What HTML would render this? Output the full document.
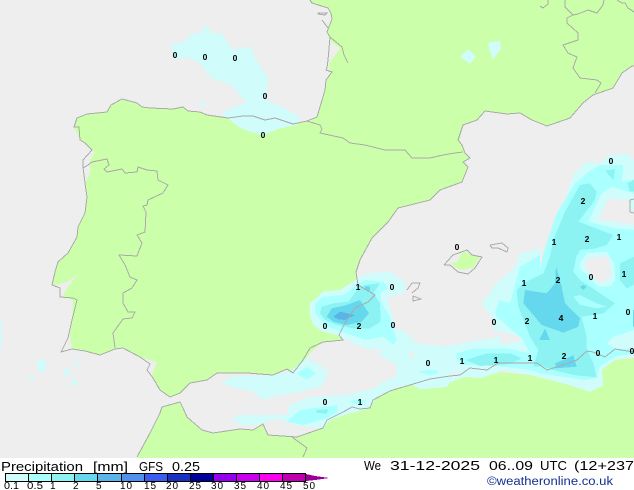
<!DOCTYPE html>
<html><head><meta charset="utf-8"><style>
html,body{margin:0;padding:0;background:#fff;width:634px;height:490px;overflow:hidden}
svg{display:block}
polygon{shape-rendering:crispEdges}
polyline{fill:none;stroke:#aaa;stroke-width:1;vector-effect:non-scaling-stroke;shape-rendering:crispEdges}
.a{fill:#d0fcfc}.b{fill:#aaffff}.c{fill:#8cf2f2}.d{fill:#66d8ee}.e{fill:#5ab4e8}.g{fill:#eeeeee}
.l text{font:bold 8.5px "Liberation Sans",sans-serif;fill:#000;text-anchor:middle}
.t{font-family:"Liberation Sans",sans-serif;fill:#000}
</style></head><body>
<svg width="634" height="490" viewBox="0 0 634 490" xmlns="http://www.w3.org/2000/svg">
<rect width="634" height="458" fill="#eeeeee"/>
<g fill="#ccffaa">
<polygon points="310,0 315,5 330,9 330,15 332,19 329,27 327,32 329,38 331,42 340,48 329,63 329,70 331,72 327,80 325,90 320,107 317,117 310,121 293,124 275,118 265,120 253,116 243,116 228,118 207,115 200,112 188,111 183,107 173,109 150,108 142,107 137,103 122,99 111,105 107,112 87,114 77,118 74,127 80,140 85,143 95,152 90,160 90,173 85,183 87,197 85,213 78,227 77,237 68,253 58,262 55,272 53,286 67,282 77,275 68,287 62,297 73,300 72,320 70,335 72,349 85,351 100,355 115,349 123,348 140,357 157,362 152,375 160,390 170,397 182,393 190,383 207,380 217,373 247,373 273,375 287,369 293,373 313,350 323,342 343,340 339,335 345,323 355,308 368,302 375,295 358,285 356,272 360,260 372,238 388,222 398,208 418,203 430,200 440,190 462,182 468,167 463,162 470,158 465,153 462,145 460,140 463,125 477,120 485,111 507,114 520,113 532,120 547,126 570,118 583,103 593,95 613,88 622,73 632,66 634,66 634,0"/>
<polygon points="137,458 150,433 160,413 162,407 180,402 183,408 187,417 202,430 213,433 240,429 253,430 263,424 268,435 297,437 323,428 327,420 343,412 352,407 360,409 370,408 373,400 380,395 400,387 413,385 420,389 447,387 453,378 467,377 480,378 500,372 530,375 563,383 590,392 602,370 613,360 634,358 634,458"/>
<polygon points="450,263 457,262 463,251 472,255 480,257 473,268 460,270"/>
</g>
<!-- Biscay, France, Atlantic -->
<g class="a">
<g transform="translate(150 0) scale(.33333)"><polygon class="a" points="65,130 105,125 125,100 150,100 170,75 190,100 215,100 250,150 305,140 315,175 355,235 345,300 395,320 450,350 440,375 390,385 340,405 300,395 265,380 240,360 215,340 250,322 290,310 245,255 185,235 150,190 110,172 70,180"/><polygon class="a" points="150,310 157,300 168,312 157,322"/></g>
<g transform="translate(440 0) scale(.33333)"><polygon class="a" points="60,170 85,148 108,170 90,192"/><polygon class="a" points="145,128 180,123 183,145 160,178 148,150"/></g>
<g transform="translate(0 90) scale(.33333)"><polygon class="a" points="113,810 135,805 138,840 120,850 112,830"/><polygon class="a" points="85,865 95,857 105,865 95,872"/><polygon class="a" points="190,845 202,835 213,845 200,860"/><polygon class="a" points="222,820 230,812 240,822 230,832"/><polygon class="a" points="213,875 223,862 233,878 223,890"/><polygon class="a" points="0,695 4,695 4,775 0,775"/></g>
</g>
<!-- Alboran -->
<g transform="translate(130 350) scale(.33333)">
<polygon class="a" points="280,100 300,80 420,75 480,65 510,40 530,25 570,45 595,70 575,110 490,130 450,135 400,150 370,125 300,110"/>
<polygon class="b" points="500,70 530,50 560,70 530,90"/>
<polygon class="a" points="305,210 320,195 470,195 480,165 540,140 650,135 730,115 780,90 780,125 740,140 720,175 660,190 600,210 580,235 510,228 480,220 440,205 380,225 340,225"/>
<polygon class="b" points="470,215 510,180 620,165 625,185 590,205 520,225"/>
<polygon class="c" points="558,180 595,178 590,192 560,188"/>
<polygon class="b" points="655,155 680,148 710,152 690,165"/>
</g>
<!-- middle band -->
<g transform="translate(380 330) scale(.33333)">
<polygon class="a" points="0,0 70,0 110,40 200,50 300,30 360,20 360,125 300,145 260,140 220,145 200,170 120,178 100,165 60,170 0,190 0,160 50,140 50,105 35,95 0,78"/>
<polygon class="g" points="88,65 100,65 102,80 95,88 88,80"/>
<polygon class="b" points="115,125 150,118 178,125 145,135"/>
<polygon class="b" points="0,0 40,0 55,30 40,55 15,30 0,20"/>
</g>
<!-- Valencia blob -->
<g transform="translate(290 260) scale(.33333)">
<polygon class="a" points="58,160 60,130 100,95 150,90 195,60 210,50 240,40 300,35 350,70 340,100 290,110 300,140 320,210 325,265 290,260 240,270 190,250 140,225 100,215 70,195"/>
<polygon class="b" points="75,160 75,130 100,110 160,105 200,75 225,60 280,65 295,85 270,100 275,130 300,170 320,240 310,255 280,230 225,240 170,220 110,200"/>
<polygon class="c" points="90,160 95,140 130,130 175,125 205,85 225,75 270,70 250,100 270,130 272,185 240,205 190,205 140,195 105,180"/>
<polygon class="d" points="110,170 125,145 170,135 210,120 237,160 215,185 170,195 130,185"/>
<polygon class="e" points="130,170 150,155 195,165 165,180 145,178"/>
<polygon class="d" points="225,80 240,80 240,92 225,90"/>
</g>
<!-- Big east blob -->
<g transform="translate(430 140) scale(.33333)">
<polygon class="a" points="470,65 510,70 540,45 590,40 612,60 612,650 555,660 515,690 520,735 480,755 400,730 300,705 200,688 100,712 30,738 0,745 0,635 70,625 170,615 270,605 270,590 190,570 190,540 155,490 200,430 255,380 270,340 330,325 330,380 360,300 400,195 430,105"/>
<polygon class="b" points="435,130 480,92 510,75 580,75 575,125 612,118 612,570 550,590 530,612 560,628 612,625 612,640 555,650 510,680 500,715 460,720 330,700 300,690 200,678 100,675 80,660 80,640 130,625 230,625 300,640 280,600 200,530 195,515 210,480 240,490 270,380 330,345 330,395 340,340 380,220"/>
<polygon class="a" points="475,245 515,160 545,140 612,160 612,270 555,265"/>
<polygon class="g" points="505,240 535,175 595,180 612,220 612,255 560,245"/>
<polygon class="c" points="360,350 370,300 405,215 450,135 480,130 500,155 495,180 445,245 550,285 530,315 480,330 440,345 430,395 450,420 555,490 520,520 455,530 470,590 470,625 490,670 500,712 430,705 370,690 340,680 310,680 325,630 300,590 265,500 260,450 280,430 340,400"/>
<polygon class="c" points="108,660 170,640 240,640 275,655 240,672 150,678"/>
<polygon class="c" points="525,92 555,88 550,120"/>
<polygon class="c" points="592,130 612,120 612,155 600,155"/>
<polygon class="b" points="435,370 450,330 560,320 570,370 570,445 555,490 450,420 430,395"/>
<polygon class="c" points="570,370 612,350 612,435 590,445 570,420"/>
<polygon class="a" points="450,370 470,340 530,335 552,370 555,420 540,440 505,440 450,385"/>
<polygon class="g" points="470,355 535,350 545,410 510,430 470,390"/>
<polygon class="b" points="430,470 450,465 500,490 530,500 500,505 450,495"/>
<polygon class="d" points="378,378 395,440 405,490 450,535 445,560 400,578 335,555 280,490 285,450 350,460 375,430"/>
<polygon class="d" points="345,565 360,600 328,600"/>
<polygon class="d" points="450,440 460,435 470,440 460,450"/>
<polygon class="d" points="375,670 400,660 430,645 440,680 380,685"/>
<polygon class="d" points="609,510 612,510 612,560 609,560"/>
<polygon class="b" points="0,690 25,692 20,702 0,703"/>
<polygon class="g" points="60,700 85,695 95,705 60,708"/>
</g>
<!-- Lines -->
<polyline points="310,0 312,3 328,8 331,13 332,19 329,27 327,32 330,37 328,60 327,68 326,70 332,72 326,80 325,90 320,107 317,117 307,121 293,124 275,118 265,120 253,116 243,116 228,118 207,115 200,112 188,111 183,107 173,109 150,108 142,107 137,103 122,99 111,105 107,112 87,114 77,118 74,127 79,127 80,140 85,143 92,150 83,160 83,167 85,183 87,197 85,213 78,227 77,237 68,253 58,262 55,272 52,285 60,288 60,297 73,298 77,300 72,320 68,338 61,352 72,349 85,351 100,355 115,349 123,348 140,357 150,364 147,370 153,378 160,390 170,397 180,393 190,383 207,380 217,373 247,373 273,375 287,369 293,373 303,360 310,348 323,342 343,340 339,335 345,323 355,308 368,302 375,295 358,285 356,272 360,260 372,238 388,222 398,208 418,203 430,200 440,190 462,182 468,167 463,162 470,158 465,153 462,145 458,140 463,125 477,120 485,111 507,114 520,113 532,120 547,126 570,118 583,103 593,95 613,88 622,73 632,66 634,66"/>
<polyline points="330,37 342,47 344,55 348,63"/>
<polyline points="318,13 327,13 325,15 318,14 318,13"/>
<polyline points="322,20 328,28"/>
<polyline points="307,121 320,125 322,129 320,133 343,138 350,143 365,145 385,150 405,150 412,158 430,158 443,155 455,153 463,152"/>
<polyline points="83,168 88,165 92,162 107,159 109,165 104,169 107,172 122,169 125,173 137,172 138,167 147,170 157,171 158,180 168,185 163,193 148,200 147,205 143,206 146,212 145,232 137,235 142,243 137,256 119,255 125,265 130,277 137,280 132,288 123,293 123,303 128,312 135,312 132,318 123,319 113,333 115,348"/>
<polyline points="565,0 565,7 573,15 567,18 567,23 578,33 578,40 563,45 568,53 577,57 573,68 580,78 597,80 601,83 595,93"/>
<polyline points="573,15 578,14 588,10 597,13 603,5 604,0"/>
<polyline points="617,0 622,3 625,3 628,8 634,12"/>
<polyline points="540,6 543,8 548,4 548,0"/>
<polyline points="137,457 150,433 160,413 162,407 180,402 183,408 187,417 202,430 213,433 240,429 253,430 263,424 268,435 297,437 323,428 327,420 343,412 352,407 360,409 370,408 373,400 390,391 430,379 450,376 460,375 470,368 487,370 498,363 537,363 547,370 563,365 577,360 587,351 593,352 605,357 615,349 634,352"/>
<polyline points="292,437 307,448 303,457"/>
<polyline points="444,265 453,255 467,250 472,255 482,257 475,268 468,274 458,272 450,265 444,265"/>
<polyline points="490,245 502,243 508,248 507,252 498,248 492,248 490,245"/>
<polyline points="407,290 412,283 420,283 418,288 412,293"/>
<polyline points="413,296 421,299 413,301 413,296"/>
<polyline points="634,199 630,200 630,212 634,213"/>
<g class="l">
<text x="175" y="58">0</text><text x="205" y="60">0</text><text x="235" y="61">0</text><text x="265" y="99">0</text><text x="263" y="138">0</text>
<text x="358" y="290">1</text><text x="392" y="290">0</text><text x="325" y="329">0</text><text x="359" y="329">2</text><text x="393" y="328">0</text>
<text x="428" y="366">0</text><text x="462" y="364">1</text><text x="496" y="363">1</text><text x="530" y="361">1</text><text x="564" y="359">2</text><text x="598" y="356">0</text><text x="632" y="354">0</text>
<text x="611" y="164">0</text><text x="583" y="204">2</text><text x="587" y="242">2</text><text x="554" y="245">1</text><text x="619" y="240">1</text><text x="591" y="280">0</text><text x="624" y="277">1</text><text x="558" y="283">2</text><text x="524" y="286">1</text>
<text x="494" y="325">0</text><text x="527" y="324">2</text><text x="561" y="321">4</text><text x="595" y="319">1</text><text x="628" y="315">0</text><text x="457" y="250">0</text><text x="325" y="405">0</text><text x="360" y="405">1</text>
</g>
<!-- Footer -->
<rect y="458" width="634" height="32" fill="#fff"/>
<g class="t" font-size="13">
<text x="1" y="471" textLength="82" lengthAdjust="spacingAndGlyphs">Precipitation</text>
<text x="93" y="471" textLength="35" lengthAdjust="spacingAndGlyphs">[mm]</text>
<text x="139" y="471" textLength="24" lengthAdjust="spacingAndGlyphs">GFS</text>
<text x="172" y="471" textLength="28" lengthAdjust="spacingAndGlyphs">0.25</text>
<text x="364" y="470" textLength="17" lengthAdjust="spacingAndGlyphs">We</text>
<text x="390" y="470" textLength="90" lengthAdjust="spacingAndGlyphs">31-12-2025</text>
<text x="489" y="470" textLength="44" lengthAdjust="spacingAndGlyphs">06..09</text>
<text x="540" y="470" textLength="27" lengthAdjust="spacingAndGlyphs">UTC</text>
<text x="574" y="470" textLength="60" lengthAdjust="spacingAndGlyphs">(12+237</text>
</g>
<text x="487" y="485" font-family="'Liberation Sans',sans-serif" font-size="11.5" fill="#103090" textLength="126" lengthAdjust="spacingAndGlyphs">©weatheronline.co.uk</text>
<g shape-rendering="crispEdges">
<rect x="5" y="473" width="24" height="9" fill="#d0fcfc"/>
<rect x="28" y="473" width="24" height="9" fill="#aaffff"/>
<rect x="51" y="473" width="24" height="9" fill="#8cf2f2"/>
<rect x="74" y="473" width="24" height="9" fill="#66d8ee"/>
<rect x="97" y="473" width="24" height="9" fill="#58b6ea"/>
<rect x="121" y="473" width="24" height="9" fill="#5090ee"/>
<rect x="144" y="473" width="24" height="9" fill="#3c5cf0"/>
<rect x="167" y="473" width="24" height="9" fill="#1a30c0"/>
<rect x="190" y="473" width="24" height="9" fill="#000099"/>
<rect x="213" y="473" width="24" height="9" fill="#9600ee"/>
<rect x="236" y="473" width="24" height="9" fill="#c800ee"/>
<rect x="259" y="473" width="24" height="9" fill="#ff00ee"/>
<rect x="282" y="473" width="24" height="9" fill="#c000b0"/>
<path d="M5.5 473.5H305.5V481.5H5.5ZM28.5 473V482M51.5 473V482M74.5 473V482M97.5 473V482M121.5 473V482M144.5 473V482M167.5 473V482M190.5 473V482M213.5 473V482M236.5 473V482M259.5 473V482M282.5 473V482" fill="none" stroke="#000"/>
</g>
<polygon points="306,474 315,476 329,478 315,480 306,481" fill="#990099"/>
<g class="t" font-size="10">
<text x="4" y="489" textLength="15" lengthAdjust="spacingAndGlyphs">0.1</text>
<text x="27" y="489" textLength="16" lengthAdjust="spacingAndGlyphs">0.5</text>
<text x="50" y="489">1</text><text x="73" y="489">2</text><text x="96" y="489">5</text>
<text x="120" y="489" textLength="12">10</text><text x="144" y="489" textLength="12">15</text><text x="166" y="489" textLength="12">20</text><text x="189" y="489" textLength="12">25</text><text x="211" y="489" textLength="12">30</text><text x="234" y="489" textLength="12">35</text><text x="257" y="489" textLength="12">40</text><text x="280" y="489" textLength="12">45</text><text x="303" y="489" textLength="12">50</text>
</g>
</svg>
</body></html>
